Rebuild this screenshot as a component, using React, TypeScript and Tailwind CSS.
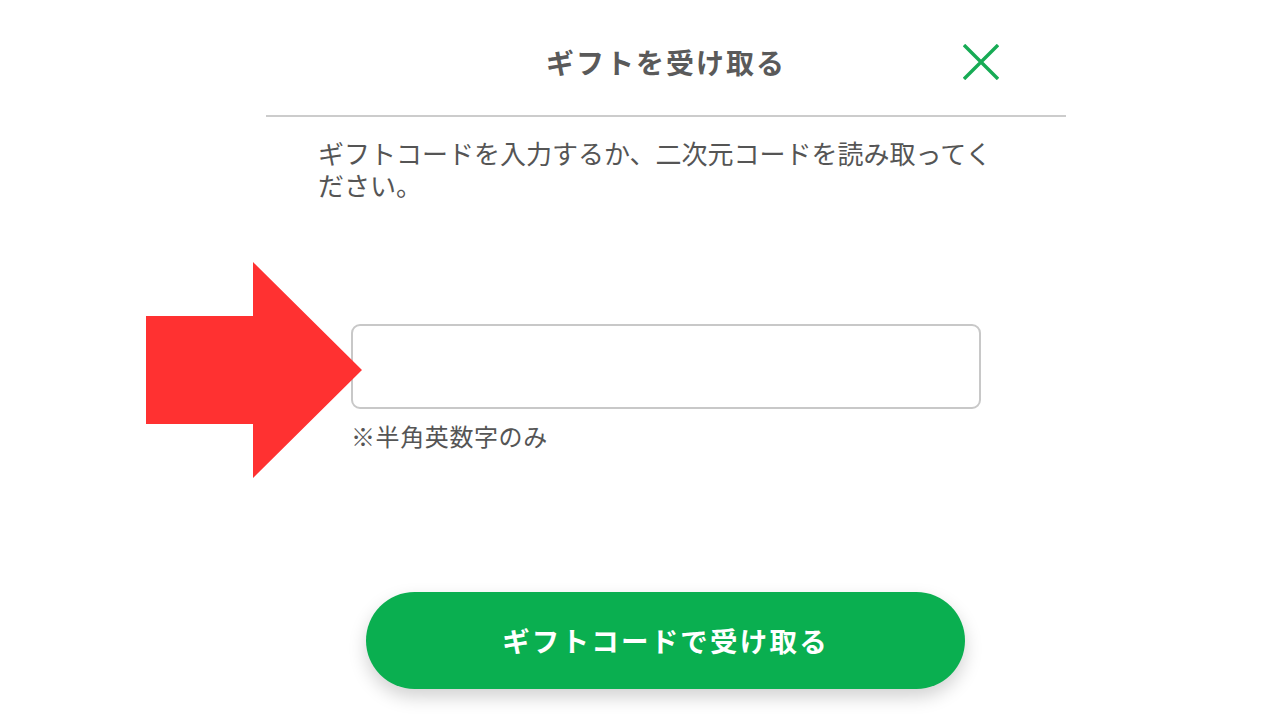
// Gift-code redeem screen with a red callout arrow pointing at the input.

const FONT = { fontFamily: '"Noto Sans CJK JP", "Noto Sans", sans-serif' };

function CloseIcon() {
  return (
    <svg width="36" height="36" viewBox="0 0 36 36" fill="none">
      <path d="M1 1 L35 35 M35 1 L1 35" stroke="#17ab55" strokeWidth="3.4" />
    </svg>
  );
}

function CalloutArrow() {
  return (
    <svg
      className="pointer-events-none absolute left-[146px] top-[262px]"
      width="218"
      height="218"
      viewBox="0 0 218 218"
    >
      <polygon points="0,54 107,54 107,0 216,108 107,216 107,162 0,162" fill="#ff3131" />
    </svg>
  );
}

export default function App() {
  return (
    <div className="relative h-[720px] w-[1280px] overflow-hidden bg-white" style={FONT}>
      <div className="ml-[266px] w-[800px]">
        {/* Header */}
        <div className="grid h-[117px] grid-cols-[1fr_auto_1fr] items-center border-b-2 border-[#cccccc]">
          <div />
          <h1 className="pt-[8px] text-[28px] font-bold tracking-[2px] text-[#5a5a5a]">
            ギフトを受け取る
          </h1>
          <div className="flex justify-end pr-[67px] pt-[8px]">
            <button type="button" aria-label="閉じる" className="flex items-center justify-center">
              <CloseIcon />
            </button>
          </div>
        </div>

        {/* Description */}
        <p className="mt-[20px] pl-[52px] pr-[60px] text-[26px] leading-[32px] text-[#555555]">
          ギフトコードを入力するか、二次元コードを読み取ってください。
        </p>

        {/* Input */}
        <div className="mt-[123px] pl-[85px]">
          <input
            type="text"
            className="h-[85px] w-[630px] rounded-[9px] border-2 border-[#c8c8c8] bg-white px-4 text-[24px] text-[#333] outline-none"
          />
          <p className="mt-[10px] text-[24px] leading-[34px] tracking-[0.6px] text-[#555555]">※半角英数字のみ</p>
        </div>

        {/* Submit */}
        <div className="mt-[139px] pl-[100px]">
          <button
            type="button"
            className="flex h-[97px] w-[599px] items-center justify-center rounded-full bg-[#0aaf50] text-[27.5px] font-bold tracking-[2.2px] text-white shadow-[0_8px_18px_rgba(0,0,0,0.18)]"
          >
            ギフトコードで受け取る
          </button>
        </div>
      </div>

      <CalloutArrow />
    </div>
  );
}
